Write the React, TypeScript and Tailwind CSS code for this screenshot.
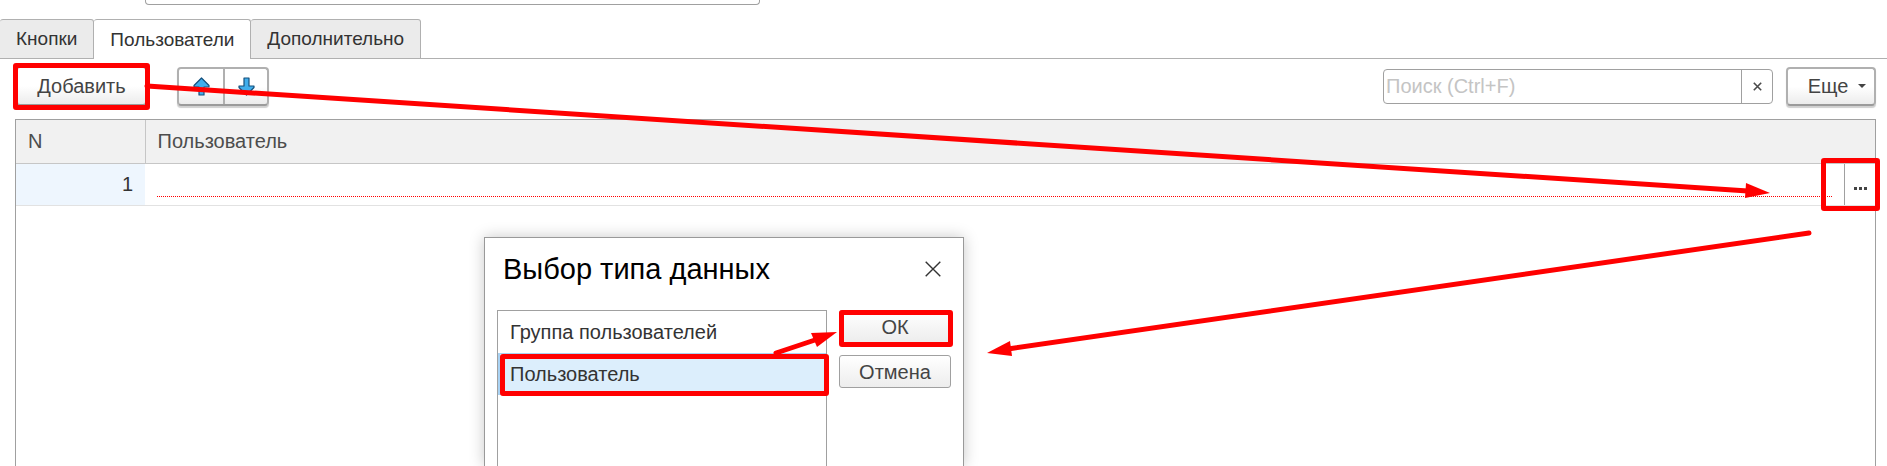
import type { ReactNode } from "react";

function Highlight({ className }: { className: string }) {
  return (
    <span
      aria-hidden="true"
      className={`pointer-events-none absolute z-20 rounded-[3px] border-5 border-[#ff0000] ${className}`}
    />
  );
}

function Tab({ children, active = false }: { children: ReactNode; active?: boolean }) {
  return (
    <button
      type="button"
      role="tab"
      aria-selected={active}
      className={`h-10 rounded-t-[3px] border-t border-r border-[#b0b0b0] px-4 text-[19px] text-[#333] ${
        active ? "bg-white" : "border-b bg-[#ebebeb]"
      }`}
    >
      {children}
    </button>
  );
}

const arrowPath = "M8.5 1 L16 8.5 V10 H11 V18 H6 V10 H1 V8.5 Z";

function MoveIcon({ down = false }: { down?: boolean }) {
  return (
    <svg width="17" height="19" viewBox="0 0 17 19" aria-hidden="true">
      <path
        d={arrowPath}
        transform={down ? "rotate(180 8.5 9.5)" : undefined}
        fill="#41aeec"
        stroke="#14507d"
        strokeWidth="1.2"
        strokeLinejoin="round"
      />
    </svg>
  );
}

const raised =
  "rounded-[4px] border-2 border-[#b0b0b0] border-b-[#9b9b9b] bg-linear-to-b from-white from-50% to-[#ececec] shadow-[0_2px_1px_#d0d0d0]";

function Toolbar() {
  return (
    <div className="flex items-center pt-[7px] pr-[11px] pl-4">
      <div className="relative">
        <button type="button" className={`h-10 w-[131px] text-[#444] ${raised}`}>
          Добавить
        </button>
        <Highlight className="-inset-x-[3px] -top-[3px] -bottom-1" />
      </div>
      <div className={`ml-[30px] flex h-[39px] w-[92px] ${raised}`}>
        <button type="button" aria-label="Переместить вверх" className="flex w-[46px] items-center justify-center border-r-2 border-[#b0b0b0]">
          <MoveIcon />
        </button>
        <button type="button" aria-label="Переместить вниз" className="flex flex-1 items-center justify-center">
          <MoveIcon down />
        </button>
      </div>
      <div className="ml-auto flex h-[35px] w-[390px] overflow-hidden rounded-[4px] border border-[#a0a0a0] bg-white">
        <input
          type="text"
          aria-label="Поиск"
          placeholder="Поиск (Ctrl+F)"
          className="min-w-0 flex-1 px-[2px] outline-none placeholder:text-[#c4c4c4]"
        />
        <button type="button" aria-label="Очистить" className="flex w-[31px] items-center justify-center border-l border-[#a0a0a0]">
          <svg width="9" height="9" viewBox="0 0 9 9" stroke="#4a4a4a" strokeWidth="1.6" aria-hidden="true">
            <path d="M.8 .8 8.2 8.2 M8.2 .8 .8 8.2" />
          </svg>
        </button>
      </div>
      <button type="button" className={`ml-[13px] flex h-[39px] w-[90px] items-center justify-center gap-[10px] pl-3 text-[#444] ${raised}`}>
        Еще
        <svg width="8" height="4" viewBox="0 0 8 4" aria-hidden="true">
          <path d="M0 0H8L4 4Z" fill="#444" />
        </svg>
      </button>
    </div>
  );
}

function UsersTable() {
  return (
    <div className="mt-[13px] mr-[11px] ml-[15px] flex-1 border border-b-0 border-[#a0a0a0]">
      <table className="w-full table-fixed border-collapse">
        <colgroup>
          <col className="w-[129px]" />
          <col />
        </colgroup>
        <thead>
          <tr className="h-[43px] border-b border-[#c6c6c6] bg-[#f1f1f1] text-left text-[#4d4d4d]">
            <th className="border-r border-[#c6c6c6] px-3 font-normal">N</th>
            <th className="px-3 font-normal">Пользователь</th>
          </tr>
        </thead>
        <tbody>
          <tr className="h-[42px] border-b border-[#e2e2e2]">
            <td className="bg-[#eef6fe] px-3 text-right text-[#333]">1</td>
            <td className="p-0">
              <div className="flex h-[41px]">
                <input
                  type="text"
                  aria-label="Пользователь"
                  className="mr-3 mb-2 ml-3 min-w-0 flex-1 border-b border-dotted border-[#ff0000] outline-none"
                />
                <div className="relative">
                  <button
                    type="button"
                    aria-label="Выбрать"
                    className="flex h-full w-[31px] items-center justify-center gap-[2px] border-l border-[#a0a0a0] pt-2"
                  >
                    <i className="size-[3px] bg-[#444]" />
                    <i className="size-[3px] bg-[#444]" />
                    <i className="size-[3px] bg-[#444]" />
                  </button>
                  <Highlight className="-top-[6px] -right-[5px] -bottom-[6px] -left-[23px]" />
                </div>
              </div>
            </td>
          </tr>
        </tbody>
      </table>
    </div>
  );
}

const dialogButton =
  "h-[33px] w-full rounded-[3px] border border-[#a0a0a0] bg-linear-to-b from-white to-[#ededed] text-[#444]";

function TypeDialog() {
  return (
    <section
      role="dialog"
      aria-labelledby="type-title"
      className="absolute top-[237px] bottom-0 left-[484px] flex w-[480px] flex-col border border-b-0 border-[#999] bg-white shadow-[0_0_14px_rgba(0,0,0,0.22)]"
    >
      <header className="flex h-[72px] items-center justify-between pr-[22px] pb-[10px] pl-[18px]">
        <h2 id="type-title" className="text-[29px] text-black">
          Выбор типа данных
        </h2>
        <button type="button" aria-label="Закрыть">
          <svg width="16" height="16" viewBox="0 0 16 16" stroke="#333" strokeWidth="1.4" aria-hidden="true">
            <path d="M.7 .7 15.3 15.3 M15.3 .7 .7 15.3" />
          </svg>
        </button>
      </header>
      <div className="flex flex-1 pr-3 pl-3">
        <ul role="listbox" aria-labelledby="type-title" className="w-[330px] border border-b-0 border-[#a0a0a0] text-[#333]">
          <li role="option" aria-selected="false" className="flex h-[42px] items-center px-3">
            Группа пользователей
          </li>
          <li
            role="option"
            aria-selected="true"
            className="relative flex h-[42px] items-center border-y border-l-2 border-[#a9d2f3] bg-[#dceefc] px-[10px]"
          >
            Пользователь
            <Highlight className="top-0 -right-[3px] -bottom-[2px] left-0" />
          </li>
        </ul>
        <div className="ml-3 flex flex-1 flex-col gap-3">
          <div className="relative">
            <button type="button" className={dialogButton}>
              ОК
            </button>
            <Highlight className="top-0 -right-[2px] -bottom-1 left-0" />
          </div>
          <button type="button" className={dialogButton}>
            Отмена
          </button>
        </div>
      </div>
    </section>
  );
}

function Arrows() {
  return (
    <svg
      className="pointer-events-none absolute inset-x-0 top-0 z-30 w-full"
      viewBox="0 0 1887 466"
      fill="#ff0000"
      stroke="#ff0000"
      aria-hidden="true"
    >
      <g strokeWidth="5" strokeLinecap="round">
        <path d="M147 86 L1748 191" />
        <path d="M1809 233 L1008 349" />
        <path d="M776 353 L818 339" />
      </g>
      <g stroke="none">
        <path d="M1770 193 L1746 183 L1745 198 Z" />
        <path d="M987 353 L1010 341 L1012 356 Z" />
        <path d="M837 332 L811 333 L817 347 Z" />
      </g>
    </svg>
  );
}

export default function App() {
  return (
    <main className="relative flex h-screen flex-col overflow-hidden bg-white font-['Liberation_Sans',Arial,sans-serif] text-[20px] leading-6">
      <input
        type="text"
        aria-label="Наименование"
        className="ml-[145px] h-[5px] w-[615px] rounded-b-[4px] border border-t-0 border-[#a0a0a0] outline-none"
      />
      <div role="tablist" className="mt-[14px] flex">
        <Tab>Кнопки</Tab>
        <Tab active>Пользователи</Tab>
        <Tab>Дополнительно</Tab>
        <div className="flex-1 border-b border-[#b0b0b0]" />
      </div>
      <Toolbar />
      <UsersTable />
      <TypeDialog />
      <Arrows />
    </main>
  );
}
